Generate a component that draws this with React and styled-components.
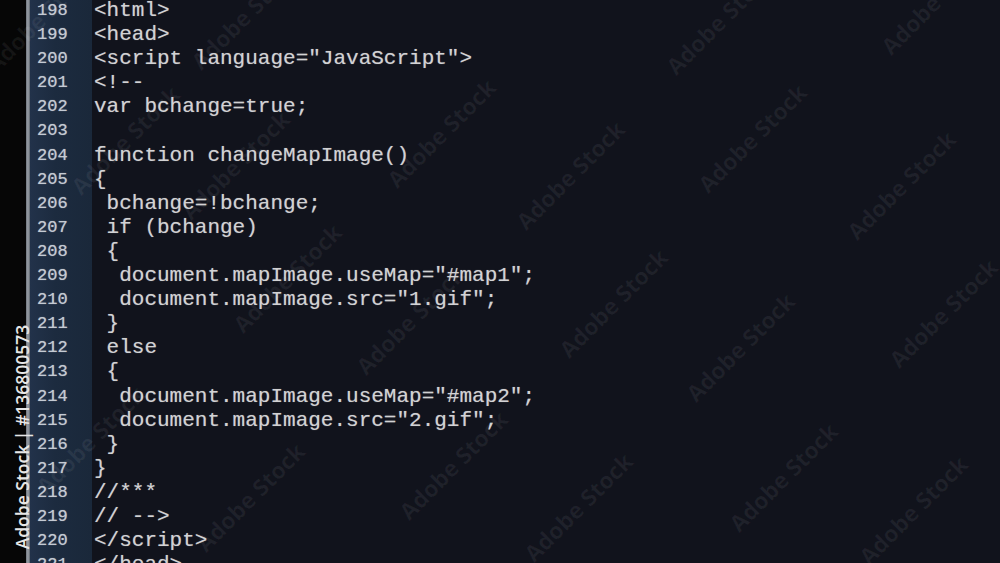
import React from "react";
import styled, { createGlobalStyle } from "styled-components";

const GlobalStyle = createGlobalStyle`
  html, body {
    margin: 0;
    padding: 0;
    background: #11131c;
    overflow: hidden;
  }
`;

const firstLine = 198;

const lines = [
  "<html>",
  "<head>",
  '<script language="JavaScript">',
  "<!--",
  "var bchange=true;",
  "",
  "function changeMapImage()",
  "{",
  " bchange=!bchange;",
  " if (bchange)",
  " {",
  '  document.mapImage.useMap="#map1";',
  '  document.mapImage.src="1.gif";',
  " }",
  " else",
  " {",
  '  document.mapImage.useMap="#map2";',
  '  document.mapImage.src="2.gif";',
  " }",
  "}",
  "//***",
  "// -->",
  "</script>",
  "</head>",
];

// rough spots of the stock watermark over the frame
const marks = [
  [40, 18], [245, 15], [720, 20], [935, 0],
  [125, 140], [235, 165], [441, 133], [570, 175], [752, 138], [901, 185],
  [287, 278], [410, 320], [613, 303], [740, 347], [943, 313],
  [90, 440], [250, 497], [453, 465], [578, 507], [783, 477], [913, 510],
];

const App = () => {
  return (
    <>
      <GlobalStyle />
      <Screen>
        <BlackStrip />
        <Rule />
        <Gutter>
          {lines.map((_, i) => (
            <LineNo key={i}>{firstLine + i}</LineNo>
          ))}
        </Gutter>
        <Code>
          {lines.map((text, i) => (
            <CodeLine key={i}>{text || " "}</CodeLine>
          ))}
        </Code>
        <Overlay>
          {marks.map(([x, y], i) => (
            <Mark key={i} style={{ left: x, top: y }}>
              Adobe Stock
            </Mark>
          ))}
          <StockId>Adobe Stock | #136800573</StockId>
        </Overlay>
      </Screen>
    </>
  );
};

const Screen = styled.div`
  position: relative;
  display: flex;
  width: 1000px;
  height: 563px;
  overflow: hidden;
  background: #11131c;
`;

const BlackStrip = styled.div`
  width: 26px;
  flex-shrink: 0;
  background: #060606;
`;

const Rule = styled.div`
  width: 4px;
  flex-shrink: 0;
  background: linear-gradient(90deg, #6f757d, #9aa0a8 50%, #5c636c);
`;

const Gutter = styled.div`
  width: 62px;
  flex-shrink: 0;
  display: flex;
  flex-direction: column;
  padding: 0 0 0 7px;
  margin-top: -1px;
  box-sizing: border-box;
  background: linear-gradient(90deg, #22324a, #1c2b3f 40%, #1a283a);
`;

const LineNo = styled.div`
  height: 24.1px;
  line-height: 24.1px;
  flex-shrink: 0;
  font-family: "Liberation Mono", "DejaVu Sans Mono", monospace;
  font-size: 17px;
  color: #c4cad3;
  text-shadow: 0 0 1px rgba(196, 202, 211, 0.7);
`;

const Code = styled.div`
  flex: 1;
  display: flex;
  flex-direction: column;
  padding-left: 2px;
  margin-top: -1px;
  background: #11131c;
`;

const CodeLine = styled.div`
  height: 24.1px;
  line-height: 24.1px;
  flex-shrink: 0;
  white-space: pre;
  font-family: "Liberation Mono", "DejaVu Sans Mono", monospace;
  font-size: 21px;
  color: #d2d2d4;
  text-shadow: 0 0 1px rgba(210, 210, 214, 0.5);
`;

const Overlay = styled.div`
  position: absolute;
  inset: 0;
  pointer-events: none;
`;

const Mark = styled.div`
  position: absolute;
  transform: translate(-50%, -50%) rotate(-45deg);
  white-space: nowrap;
  font-family: "Open Sans", "Liberation Sans", sans-serif;
  font-weight: 700;
  font-size: 23px;
  color: rgba(255, 255, 255, 0.06);
`;

const StockId = styled.div`
  position: absolute;
  left: 22px;
  top: 437px;
  transform: translate(-50%, -50%) rotate(-90deg);
  white-space: nowrap;
  font-family: "Open Sans", "Liberation Sans", sans-serif;
  font-size: 17.5px;
  font-weight: 600;
  color: #e6e6e6;
`;

export default App;
